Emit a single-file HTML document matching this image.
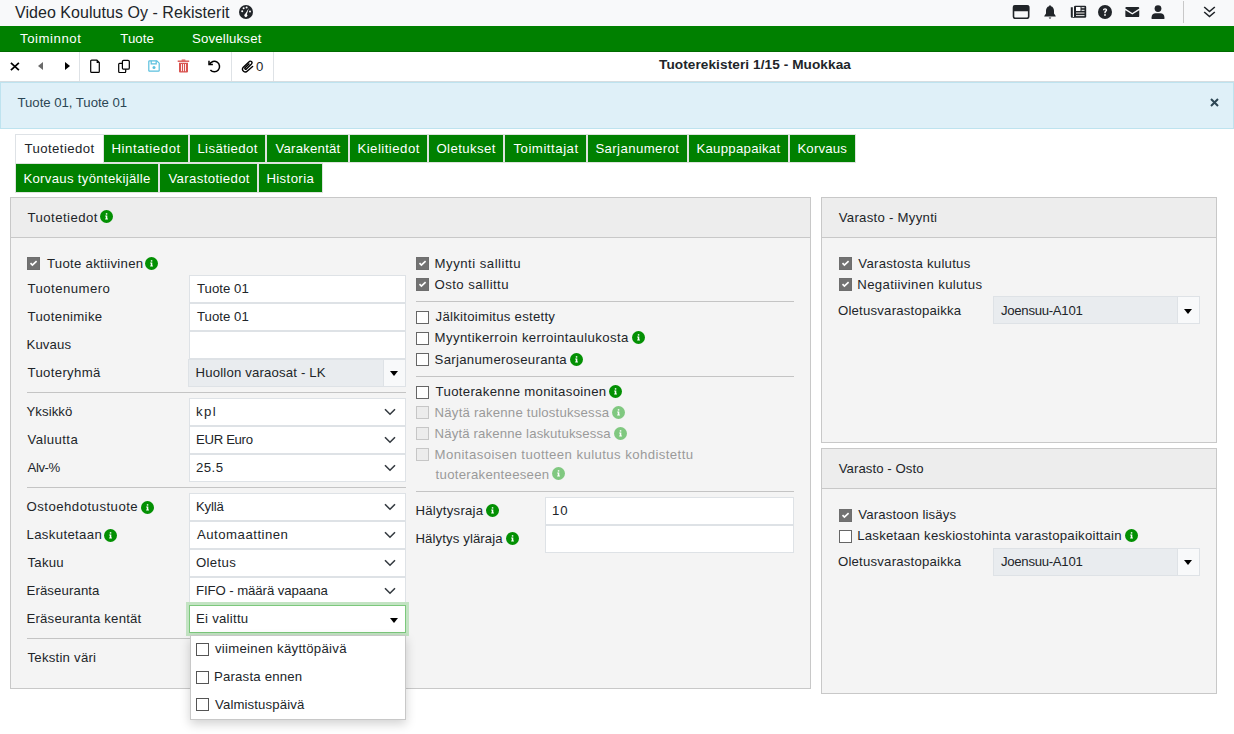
<!DOCTYPE html>
<html><head><meta charset="utf-8">
<style>
*{box-sizing:border-box;margin:0;padding:0}
html,body{width:1234px;height:734px;overflow:hidden;background:#fff;font-family:"Liberation Sans",sans-serif;color:#212529;font-size:13.2px}
.a{position:absolute}
.a svg{display:block}
.t{position:absolute;white-space:nowrap;line-height:20px}
.cb{position:absolute;width:13px;height:13px;border:1px solid #666;background:#fff}
.cb svg{position:absolute;left:-1px;top:-1px}
.cb.on{background:#727272;border-color:#6e6e6e}
.cb.dis{border-color:#c6c6c6;background:#ececec}
</style></head><body>
<div class="a" style="left:0px;top:0px;width:1234px;height:26px;background:#f8f9fa"></div>
<div class="t" style="left:15.00px;top:3.00px;font-size:16px;letter-spacing:0.045px">Video Koulutus Oy - Rekisterit</div>
<div class="a" style="left:239px;top:5px;width:14px;height:14px"><svg width="14" height="14" viewBox="0 0 14 14"><circle cx="7" cy="7" r="7" fill="#212529"/><circle cx="3.2" cy="6.2" r="1" fill="#fff"/><circle cx="4.6" cy="3.3" r="1" fill="#fff"/><circle cx="7.6" cy="2.6" r="1" fill="#fff"/><circle cx="11" cy="6.4" r="1" fill="#fff"/><path d="M9.8 3.2 L7.9 9.2 A1.6 1.6 0 1 1 6.1 9 Z" fill="#fff"/></svg></div>
<div class="a" style="left:1012px;top:5px;width:18px;height:14px"><svg width="18" height="14" viewBox="0 0 18 14"><rect x="1.5" y="0.9" width="15.2" height="12.4" rx="1.8" fill="none" stroke="#212529" stroke-width="1.6"/><rect x="1" y="0.4" width="16.2" height="5.8" rx="1" fill="#212529"/></svg></div>
<div class="a" style="left:1043px;top:5px;width:14px;height:14px"><svg width="14" height="14" viewBox="0 0 14 14"><path d="M7 0.3 C7.6 0.3 7.9 0.7 7.9 1.2 C10 1.7 11 3.5 11 5.8 L11 8.6 L12.7 10.9 V11.6 H1.3 V10.9 L3 8.6 L3 5.8 C3 3.5 4 1.7 6.1 1.2 C6.1 0.7 6.4 0.3 7 0.3Z" fill="#212529"/><path d="M5.6 12.4 H8.4 L7 13.9Z" fill="#212529"/></svg></div>
<div class="a" style="left:1070px;top:5px;width:17px;height:14px"><svg width="17" height="14" viewBox="0 0 17 14"><rect x="4" y="0.8" width="12.2" height="12" rx="1.3" fill="#212529"/><path d="M0.8 2.2 H2.8 V12.8 H2 A1.2 1.2 0 0 1 0.8 11.6Z" fill="#212529"/><rect x="2.8" y="12" width="2" height="0.8" fill="#212529"/><rect x="6" y="2" width="4.5" height="4" fill="#fff"/><rect x="11.5" y="2.2" width="3" height="1" fill="#fff"/><rect x="11.5" y="4.8" width="3" height="1" fill="#fff"/><rect x="6" y="7" width="8.5" height="2" fill="#8a8a8a"/><rect x="6" y="10.2" width="8.5" height="0.9" fill="#fff"/></svg></div>
<div class="a" style="left:1098px;top:5px;width:14px;height:14px"><svg width="14" height="14" viewBox="0 0 14 14"><circle cx="7" cy="7" r="7" fill="#212529"/><path d="M4.9 5.3 C4.9 3.9 5.9 3.2 7.1 3.2 C8.3 3.2 9.2 4 9.2 5.1 C9.2 6.5 7.7 6.6 7.7 7.8 V8.2 H6.3 V7.6 C6.3 6.1 7.7 5.9 7.7 5.1 C7.7 4.7 7.4 4.5 7 4.5 C6.6 4.5 6.3 4.8 6.3 5.3Z" fill="#fff"/><circle cx="7" cy="9.9" r="0.95" fill="#fff"/></svg></div>
<div class="a" style="left:1125px;top:7px;width:15px;height:11px"><svg width="14.6" height="10.2" viewBox="0 0 15 11"><path d="M1.2 0 H13.8 A1.2 1.2 0 0 1 15 1.2 V1.6 L7.5 6.4 L0 1.6 V1.2 A1.2 1.2 0 0 1 1.2 0Z" fill="#212529"/><path d="M0 3.4 L7.5 8.2 L15 3.4 V9.8 A1.2 1.2 0 0 1 13.8 11 H1.2 A1.2 1.2 0 0 1 0 9.8Z" fill="#212529"/></svg></div>
<div class="a" style="left:1151px;top:5px;width:14px;height:14px"><svg width="14" height="14" viewBox="0 0 14 14"><circle cx="7" cy="3.6" r="3.4" fill="#212529"/><path d="M0.6 14 V12.2 C0.6 9.9 2.4 8.3 4.6 8.3 H9.4 C11.6 8.3 13.4 9.9 13.4 12.2 V14Z" fill="#212529"/></svg></div>
<div class="a" style="left:1183px;top:1px;width:1px;height:22px;background:#c8c8c8"></div>
<div class="a" style="left:1203px;top:6px;width:13px;height:12px"><svg width="13" height="12" viewBox="0 0 13 12"><path d="M1.2 1 L6.5 5.5 L11.8 1 M1.2 6 L6.5 10.5 L11.8 6" stroke="#212529" stroke-width="1.6" fill="none"/></svg></div>
<div class="a" style="left:0px;top:26px;width:1234px;height:26px;background:#008000"></div>
<div class="a" style="left:0px;top:51px;width:1234px;height:1px;background:#006b00"></div>
<div class="t" style="left:20.00px;top:29.00px;color:#fff;letter-spacing:0.562px">Toiminnot</div>
<div class="t" style="left:120.30px;top:29.00px;color:#fff;letter-spacing:0.075px">Tuote</div>
<div class="t" style="left:192.00px;top:29.00px;color:#fff;letter-spacing:0.190px">Sovellukset</div>
<div class="a" style="left:0px;top:52px;width:1234px;height:29px;background:#fff"></div>
<div class="a" style="left:0px;top:81px;width:1234px;height:1px;background:#d6dde1"></div>
<div class="a" style="left:79px;top:52px;width:1px;height:29px;background:#dee2e6"></div>
<div class="a" style="left:231px;top:52px;width:1px;height:29px;background:#dee2e6"></div>
<div class="a" style="left:273px;top:52px;width:1px;height:29px;background:#dee2e6"></div>
<div class="a" style="left:10px;top:61.5px;width:10px;height:9px"><svg width="10" height="9" viewBox="0 0 10 9"><path d="M0.9 0.8 L8.9 8.2 M8.9 0.8 L0.9 8.2" stroke="#000" stroke-width="1.7"/></svg></div>
<div class="a" style="left:38px;top:62px;width:0;height:0;border-top:4px solid transparent;border-bottom:4px solid transparent;border-right:5px solid #6a6a6a"></div>
<div class="a" style="left:64.5px;top:62px;width:0;height:0;border-top:4px solid transparent;border-bottom:4px solid transparent;border-left:5.5px solid #000"></div>
<div class="a" style="left:90px;top:59px;width:11px;height:14px"><svg width="11" height="14" viewBox="0 0 11 14"><path d="M1.6 1.1 H6.9 L9.3 3.6 V12.4 A0.9 0.9 0 0 1 8.4 13.3 H1.6 A0.9 0.9 0 0 1 0.7 12.4 V2 A0.9 0.9 0 0 1 1.6 1.1Z" fill="none" stroke="#000" stroke-width="1.2"/><path d="M6.6 1.1 L9.4 3.9 H6.6Z" fill="#000"/></svg></div>
<div class="a" style="left:118px;top:59px;width:13px;height:14px"><svg width="13" height="14" viewBox="0 0 13 14"><rect x="4.4" y="1.3" width="6.9" height="8.9" rx="1.3" fill="none" stroke="#000" stroke-width="1.2"/><path d="M4.4 4.3 H1.6 A0.9 0.9 0 0 0 0.7 5.2 V12.6 A0.9 0.9 0 0 0 1.6 13.5 H6.8 A0.9 0.9 0 0 0 7.7 12.6 V10.2" fill="none" stroke="#000" stroke-width="1.2"/></svg></div>
<div class="a" style="left:148px;top:60px;width:12px;height:12px"><svg width="12" height="12" viewBox="0 0 12 12"><path d="M1.6 0.8 H8.8 L11.2 3.2 V10.4 A0.8 0.8 0 0 1 10.4 11.2 H1.6 A0.8 0.8 0 0 1 0.8 10.4 V1.6 A0.8 0.8 0 0 1 1.6 0.8Z" fill="none" stroke="#5bc0de" stroke-width="1.2"/><path d="M3.2 0.8 V3.9 H8.2 V0.8" fill="none" stroke="#5bc0de" stroke-width="1.2"/><circle cx="6" cy="7.4" r="1.5" fill="#5bc0de"/></svg></div>
<div class="a" style="left:177px;top:59px;width:13px;height:14px"><svg width="13" height="14" viewBox="0 0 13 14"><rect x="0.7" y="1.5" width="11.5" height="1.4" fill="#d9534f"/><rect x="4.5" y="0.6" width="4" height="1.2" rx="0.5" fill="#d9534f"/><path d="M2 3.8 H11 V12.6 A1 1 0 0 1 10 13.6 H3 A1 1 0 0 1 2 12.6Z" fill="#d9534f"/><rect x="4" y="5" width="0.9" height="7.2" fill="#fff"/><rect x="6.05" y="5" width="0.9" height="7.2" fill="#fff"/><rect x="8.1" y="5" width="0.9" height="7.2" fill="#fff"/></svg></div>
<div class="a" style="left:208px;top:60px;width:13px;height:13px"><svg width="13" height="13" viewBox="0 0 13 13"><path d="M1.6 4.4 A5.2 5.2 0 1 1 2.4 9.9" fill="none" stroke="#000" stroke-width="1.5"/><path d="M1 0.8 V4.6 H4.9" fill="none" stroke="#000" stroke-width="1.5"/></svg></div>
<div class="a" style="left:240px;top:59px;width:14px;height:14px"><svg width="14" height="14" viewBox="0 0 14 14"><path d="M12.6 7.4 L7.4 12 A2.5 2.5 0 0 1 3.3 8.3 L9.1 2.7 A1.6 1.6 0 0 1 11.5 4.9 L6.4 10 A0.9 0.9 0 0 1 5.1 8.7 L9 4.9" fill="none" stroke="#000" stroke-width="1.4" stroke-linecap="round" stroke-linejoin="round"/></svg></div>
<div class="t" style="left:256.00px;top:57.00px">0</div>
<div class="t" style="left:659.00px;top:55.00px;font-size:13.6px;font-weight:bold;letter-spacing:0.089px">Tuoterekisteri 1/15 - Muokkaa</div>
<div class="a" style="left:0px;top:82px;width:1234px;height:47px;background:#dff0f8;border:1px solid #bee3ef"></div>
<div class="t" style="left:17.50px;top:93.00px;color:#2c4654;letter-spacing:-0.035px">Tuote 01, Tuote 01</div>
<div class="a" style="left:1210px;top:98px;width:9px;height:9px"><svg width="9" height="9" viewBox="0 0 9 9"><path d="M1 1 L8 8 M8 1 L1 8" stroke="#2c4654" stroke-width="2"/></svg></div>
<div class="a" style="left:15px;top:134px;width:89px;height:29px;background:#fff;border:1px solid #dee2e6;border-bottom:none"></div>
<div class="t" style="left:24.40px;top:139.00px;letter-spacing:0.440px">Tuotetiedot</div>
<div class="a" style="left:103px;top:134px;width:86px;height:29px;background:#008000;border:1px solid #dde3dd"></div>
<div class="t" style="left:111.40px;top:139.00px;color:#fff;letter-spacing:0.580px">Hintatiedot</div>
<div class="a" style="left:189px;top:134px;width:77px;height:29px;background:#008000;border:1px solid #dde3dd"></div>
<div class="t" style="left:197.40px;top:139.00px;color:#fff;letter-spacing:0.400px">Lisätiedot</div>
<div class="a" style="left:266px;top:134px;width:83px;height:29px;background:#008000;border:1px solid #dde3dd"></div>
<div class="t" style="left:275.40px;top:139.00px;color:#fff;letter-spacing:0.233px">Varakentät</div>
<div class="a" style="left:349px;top:134px;width:79px;height:29px;background:#008000;border:1px solid #dde3dd"></div>
<div class="t" style="left:357.40px;top:139.00px;color:#fff;letter-spacing:0.480px">Kielitiedot</div>
<div class="a" style="left:428px;top:134px;width:76px;height:29px;background:#008000;border:1px solid #dde3dd"></div>
<div class="t" style="left:436.40px;top:139.00px;color:#fff;letter-spacing:0.413px">Oletukset</div>
<div class="a" style="left:504px;top:134px;width:83px;height:29px;background:#008000;border:1px solid #dde3dd"></div>
<div class="t" style="left:513.40px;top:139.00px;color:#fff;letter-spacing:0.540px">Toimittajat</div>
<div class="a" style="left:587px;top:134px;width:101px;height:29px;background:#008000;border:1px solid #dde3dd"></div>
<div class="t" style="left:595.40px;top:139.00px;color:#fff;letter-spacing:0.400px">Sarjanumerot</div>
<div class="a" style="left:688px;top:134px;width:101px;height:29px;background:#008000;border:1px solid #dde3dd"></div>
<div class="t" style="left:696.40px;top:139.00px;color:#fff;letter-spacing:0.282px">Kauppapaikat</div>
<div class="a" style="left:789px;top:134px;width:67px;height:29px;background:#008000;border:1px solid #dde3dd"></div>
<div class="t" style="left:797.40px;top:139.00px;color:#fff;letter-spacing:0.183px">Korvaus</div>
<div class="a" style="left:15px;top:163px;width:144px;height:30px;background:#008000;border:1px solid #dde3dd"></div>
<div class="t" style="left:23.40px;top:169.00px;color:#fff;letter-spacing:0.300px">Korvaus työntekijälle</div>
<div class="a" style="left:159px;top:163px;width:99px;height:30px;background:#008000;border:1px solid #dde3dd"></div>
<div class="t" style="left:168.40px;top:169.00px;color:#fff;letter-spacing:0.367px">Varastotiedot</div>
<div class="a" style="left:258px;top:163px;width:65px;height:30px;background:#008000;border:1px solid #dde3dd"></div>
<div class="t" style="left:266.40px;top:169.00px;color:#fff;letter-spacing:0.386px">Historia</div>
<div class="a" style="left:10px;top:197px;width:801px;height:492px;background:#f4f4f4;border:1px solid #c8c8c8"></div>
<div class="a" style="left:11px;top:198px;width:799px;height:40px;background:#ededed;border-bottom:1px solid #c8c8c8"></div>
<div class="a" style="left:821px;top:197px;width:396px;height:246px;background:#f4f4f4;border:1px solid #c8c8c8"></div>
<div class="a" style="left:822px;top:198px;width:394px;height:40px;background:#ededed;border-bottom:1px solid #c8c8c8"></div>
<div class="a" style="left:821px;top:448px;width:396px;height:246px;background:#f4f4f4;border:1px solid #c8c8c8"></div>
<div class="a" style="left:822px;top:449px;width:394px;height:40px;background:#ededed;border-bottom:1px solid #c8c8c8"></div>
<div class="t" style="left:27.50px;top:208.00px;letter-spacing:0.440px">Tuotetiedot</div>
<div class="a" style="left:100px;top:210px;width:13px;height:13px"><svg width="13" height="13" viewBox="0 0 13 13"><circle cx="6.5" cy="6.5" r="6.5" fill="#039003"/><rect x="5.8" y="3.2" width="1.5" height="1.4" fill="#fff"/><path d="M5.2 5.5 H7.3 V8.6 H7.9 V9.6 H5.2 V8.6 H5.8 V6.4 H5.2Z" fill="#fff"/></svg></div>
<div class="cb on" style="left:27px;top:257px"><svg width="13" height="13" viewBox="0 0 13 13"><path d="M3.5 6.2 L5.4 8 L9.6 4.1" stroke="#fff" stroke-width="1.7" fill="none"/></svg></div>
<div class="t" style="left:47.00px;top:254.00px;letter-spacing:0.280px">Tuote aktiivinen</div>
<div class="a" style="left:145px;top:256.5px;width:13px;height:13px"><svg width="13" height="13" viewBox="0 0 13 13"><circle cx="6.5" cy="6.5" r="6.5" fill="#039003"/><rect x="5.8" y="3.2" width="1.5" height="1.4" fill="#fff"/><path d="M5.2 5.5 H7.3 V8.6 H7.9 V9.6 H5.2 V8.6 H5.8 V6.4 H5.2Z" fill="#fff"/></svg></div>
<div class="t" style="left:27.50px;top:279.00px;letter-spacing:0.440px">Tuotenumero</div>
<div class="a" style="left:189px;top:275px;width:217px;height:28px;background:#fff;border:1px solid #dee2e6"></div>
<div class="t" style="left:197.00px;top:279.00px;letter-spacing:0.029px">Tuote 01</div>
<div class="t" style="left:27.50px;top:307.00px;letter-spacing:0.330px">Tuotenimike</div>
<div class="a" style="left:189px;top:303px;width:217px;height:28px;background:#fff;border:1px solid #dee2e6"></div>
<div class="t" style="left:197.00px;top:307.00px;letter-spacing:0.029px">Tuote 01</div>
<div class="t" style="left:26.50px;top:335.00px;letter-spacing:0.120px">Kuvaus</div>
<div class="a" style="left:189px;top:331px;width:217px;height:28px;background:#fff;border:1px solid #dee2e6"></div>
<div class="t" style="left:27.50px;top:363.00px;letter-spacing:0.333px">Tuoteryhmä</div>
<div class="a" style="left:188px;top:359px;width:218px;height:28px;background:#e9ecef;border:1px solid #dee2e6"></div>
<div class="a" style="left:383px;top:360px;width:22px;height:26px;background:#f8f9fa;border-left:1px solid #dee2e6"></div>
<div class="t" style="left:195.50px;top:363.00px;letter-spacing:0.165px">Huollon varaosat - LK</div>
<div class="a" style="left:389.5px;top:371px;width:0;height:0;border-left:4.5px solid transparent;border-right:4.5px solid transparent;border-top:5px solid #000"></div>
<div class="a" style="left:27px;top:392px;width:379px;height:1px;background:#c4c4c4"></div>
<div class="t" style="left:26.50px;top:402.00px;letter-spacing:0.067px">Yksikkö</div>
<div class="a" style="left:189px;top:398px;width:217px;height:28px;background:#fff;border:1px solid #dee2e6"></div>
<div class="t" style="left:196.00px;top:402.00px;letter-spacing:1.350px">kpl</div>
<div class="a" style="left:384px;top:408px;width:12px;height:8px"><svg width="12" height="8" viewBox="0 0 12 8"><path d="M1 1.2 L6 6.2 L11 1.2" stroke="#343a40" stroke-width="1.6" fill="none"/></svg></div>
<div class="t" style="left:27.50px;top:430.00px;letter-spacing:0.400px">Valuutta</div>
<div class="a" style="left:189px;top:426px;width:217px;height:28px;background:#fff;border:1px solid #dee2e6"></div>
<div class="t" style="left:196.00px;top:430.00px;letter-spacing:-0.343px">EUR Euro</div>
<div class="a" style="left:384px;top:436px;width:12px;height:8px"><svg width="12" height="8" viewBox="0 0 12 8"><path d="M1 1.2 L6 6.2 L11 1.2" stroke="#343a40" stroke-width="1.6" fill="none"/></svg></div>
<div class="t" style="left:27.50px;top:458.00px;letter-spacing:-0.400px">Alv-%</div>
<div class="a" style="left:189px;top:454px;width:217px;height:28px;background:#fff;border:1px solid #dee2e6"></div>
<div class="t" style="left:196.00px;top:458.00px;letter-spacing:0.467px">25.5</div>
<div class="a" style="left:384px;top:464px;width:12px;height:8px"><svg width="12" height="8" viewBox="0 0 12 8"><path d="M1 1.2 L6 6.2 L11 1.2" stroke="#343a40" stroke-width="1.6" fill="none"/></svg></div>
<div class="a" style="left:27px;top:487px;width:379px;height:1px;background:#c4c4c4"></div>
<div class="t" style="left:26.50px;top:497.00px;letter-spacing:0.473px">Ostoehdotustuote</div>
<div class="a" style="left:140.7px;top:500.5px;width:13px;height:13px"><svg width="13" height="13" viewBox="0 0 13 13"><circle cx="6.5" cy="6.5" r="6.5" fill="#039003"/><rect x="5.8" y="3.2" width="1.5" height="1.4" fill="#fff"/><path d="M5.2 5.5 H7.3 V8.6 H7.9 V9.6 H5.2 V8.6 H5.8 V6.4 H5.2Z" fill="#fff"/></svg></div>
<div class="a" style="left:189px;top:493px;width:217px;height:28px;background:#fff;border:1px solid #dee2e6"></div>
<div class="t" style="left:196.00px;top:497.00px;letter-spacing:-0.175px">Kyllä</div>
<div class="a" style="left:384px;top:503px;width:12px;height:8px"><svg width="12" height="8" viewBox="0 0 12 8"><path d="M1 1.2 L6 6.2 L11 1.2" stroke="#343a40" stroke-width="1.6" fill="none"/></svg></div>
<div class="t" style="left:26.50px;top:525.00px;letter-spacing:0.340px">Laskutetaan</div>
<div class="a" style="left:104px;top:528.5px;width:13px;height:13px"><svg width="13" height="13" viewBox="0 0 13 13"><circle cx="6.5" cy="6.5" r="6.5" fill="#039003"/><rect x="5.8" y="3.2" width="1.5" height="1.4" fill="#fff"/><path d="M5.2 5.5 H7.3 V8.6 H7.9 V9.6 H5.2 V8.6 H5.8 V6.4 H5.2Z" fill="#fff"/></svg></div>
<div class="a" style="left:189px;top:521px;width:217px;height:28px;background:#fff;border:1px solid #dee2e6"></div>
<div class="t" style="left:197.00px;top:525.00px;letter-spacing:0.492px">Automaattinen</div>
<div class="a" style="left:384px;top:531px;width:12px;height:8px"><svg width="12" height="8" viewBox="0 0 12 8"><path d="M1 1.2 L6 6.2 L11 1.2" stroke="#343a40" stroke-width="1.6" fill="none"/></svg></div>
<div class="t" style="left:27.50px;top:553.00px;letter-spacing:0.250px">Takuu</div>
<div class="a" style="left:189px;top:549px;width:217px;height:28px;background:#fff;border:1px solid #dee2e6"></div>
<div class="t" style="left:196.00px;top:553.00px;letter-spacing:0.340px">Oletus</div>
<div class="a" style="left:384px;top:559px;width:12px;height:8px"><svg width="12" height="8" viewBox="0 0 12 8"><path d="M1 1.2 L6 6.2 L11 1.2" stroke="#343a40" stroke-width="1.6" fill="none"/></svg></div>
<div class="t" style="left:26.50px;top:581.00px;letter-spacing:0.110px">Eräseuranta</div>
<div class="a" style="left:189px;top:577px;width:217px;height:28px;background:#fff;border:1px solid #dee2e6"></div>
<div class="t" style="left:196.00px;top:581.00px;letter-spacing:-0.079px">FIFO - määrä vapaana</div>
<div class="a" style="left:384px;top:587px;width:12px;height:8px"><svg width="12" height="8" viewBox="0 0 12 8"><path d="M1 1.2 L6 6.2 L11 1.2" stroke="#343a40" stroke-width="1.6" fill="none"/></svg></div>
<div class="t" style="left:26.50px;top:609.00px;letter-spacing:0.194px">Eräseuranta kentät</div>
<div class="a" style="left:27px;top:638px;width:379px;height:1px;background:#c4c4c4"></div>
<div class="t" style="left:27.50px;top:648.00px;letter-spacing:0.236px">Tekstin väri</div>
<div class="a" style="left:186px;top:602px;width:223px;height:34px;background:#c3e3c3"></div>
<div class="a" style="left:188.5px;top:605px;width:217.5px;height:28px;background:#fff;border:1px solid #7cc87c"></div>
<div class="t" style="left:196.00px;top:609.00px;letter-spacing:0.256px">Ei valittu</div>
<div class="a" style="left:389.5px;top:618px;width:0;height:0;border-left:4.5px solid transparent;border-right:4.5px solid transparent;border-top:5px solid #000"></div>
<div class="a" style="left:189.5px;top:635px;width:216px;height:85px;background:#fff;border:1px solid #c8c8c8;box-shadow:0 4px 10px rgba(0,0,0,.18)"></div>
<div class="a" style="left:196px;top:643px;width:13px;height:13px;background:#fff;border:1px solid #555"></div>
<div class="t" style="left:215.00px;top:639.00px;letter-spacing:0.270px">viimeinen käyttöpäivä</div>
<div class="a" style="left:196px;top:670.5px;width:13px;height:13px;background:#fff;border:1px solid #555"></div>
<div class="t" style="left:214.00px;top:667.00px;letter-spacing:0.192px">Parasta ennen</div>
<div class="a" style="left:196px;top:698.3px;width:13px;height:13px;background:#fff;border:1px solid #555"></div>
<div class="t" style="left:215.00px;top:695.00px;letter-spacing:0.123px">Valmistuspäivä</div>
<div class="cb on" style="left:416px;top:257px"><svg width="13" height="13" viewBox="0 0 13 13"><path d="M3.5 6.2 L5.4 8 L9.6 4.1" stroke="#fff" stroke-width="1.7" fill="none"/></svg></div>
<div class="t" style="left:434.60px;top:254.00px;letter-spacing:0.486px">Myynti sallittu</div>
<div class="cb on" style="left:416px;top:278px"><svg width="13" height="13" viewBox="0 0 13 13"><path d="M3.5 6.2 L5.4 8 L9.6 4.1" stroke="#fff" stroke-width="1.7" fill="none"/></svg></div>
<div class="t" style="left:434.60px;top:275.00px;letter-spacing:0.417px">Osto sallittu</div>
<div class="a" style="left:416px;top:301px;width:378px;height:1px;background:#c4c4c4"></div>
<div class="cb" style="left:416px;top:311px"></div>
<div class="t" style="left:435.60px;top:307.00px;letter-spacing:0.250px">Jälkitoimitus estetty</div>
<div class="cb" style="left:416px;top:332px"></div>
<div class="t" style="left:434.60px;top:328.00px;letter-spacing:0.373px">Myyntikerroin kerrointaulukosta</div>
<div class="a" style="left:632px;top:331px;width:13px;height:13px"><svg width="13" height="13" viewBox="0 0 13 13"><circle cx="6.5" cy="6.5" r="6.5" fill="#039003"/><rect x="5.8" y="3.2" width="1.5" height="1.4" fill="#fff"/><path d="M5.2 5.5 H7.3 V8.6 H7.9 V9.6 H5.2 V8.6 H5.8 V6.4 H5.2Z" fill="#fff"/></svg></div>
<div class="cb" style="left:416px;top:353px"></div>
<div class="t" style="left:434.60px;top:350.00px;letter-spacing:0.294px">Sarjanumeroseuranta</div>
<div class="a" style="left:570px;top:352.5px;width:13px;height:13px"><svg width="13" height="13" viewBox="0 0 13 13"><circle cx="6.5" cy="6.5" r="6.5" fill="#039003"/><rect x="5.8" y="3.2" width="1.5" height="1.4" fill="#fff"/><path d="M5.2 5.5 H7.3 V8.6 H7.9 V9.6 H5.2 V8.6 H5.8 V6.4 H5.2Z" fill="#fff"/></svg></div>
<div class="a" style="left:416px;top:376px;width:378px;height:1px;background:#c4c4c4"></div>
<div class="cb" style="left:416px;top:385.5px"></div>
<div class="t" style="left:435.60px;top:382.00px;letter-spacing:0.317px">Tuoterakenne monitasoinen</div>
<div class="a" style="left:608.5px;top:384.5px;width:13px;height:13px"><svg width="13" height="13" viewBox="0 0 13 13"><circle cx="6.5" cy="6.5" r="6.5" fill="#039003"/><rect x="5.8" y="3.2" width="1.5" height="1.4" fill="#fff"/><path d="M5.2 5.5 H7.3 V8.6 H7.9 V9.6 H5.2 V8.6 H5.8 V6.4 H5.2Z" fill="#fff"/></svg></div>
<div class="cb dis" style="left:416px;top:406px"></div>
<div class="t" style="left:434.60px;top:403.00px;color:#9a9a9a;letter-spacing:0.196px">Näytä rakenne tulostuksessa</div>
<div class="a" style="left:611.8px;top:405.5px;width:13px;height:13px"><svg width="13" height="13" viewBox="0 0 13 13"><circle cx="6.5" cy="6.5" r="6.5" fill="#80c880"/><rect x="5.8" y="3.2" width="1.5" height="1.4" fill="#fff"/><path d="M5.2 5.5 H7.3 V8.6 H7.9 V9.6 H5.2 V8.6 H5.8 V6.4 H5.2Z" fill="#fff"/></svg></div>
<div class="cb dis" style="left:416px;top:427px"></div>
<div class="t" style="left:434.60px;top:424.00px;color:#9a9a9a;letter-spacing:0.146px">Näytä rakenne laskutuksessa</div>
<div class="a" style="left:613.5px;top:426.5px;width:13px;height:13px"><svg width="13" height="13" viewBox="0 0 13 13"><circle cx="6.5" cy="6.5" r="6.5" fill="#80c880"/><rect x="5.8" y="3.2" width="1.5" height="1.4" fill="#fff"/><path d="M5.2 5.5 H7.3 V8.6 H7.9 V9.6 H5.2 V8.6 H5.8 V6.4 H5.2Z" fill="#fff"/></svg></div>
<div class="cb dis" style="left:416px;top:448px"></div>
<div class="t" style="left:434.60px;top:445.00px;color:#9a9a9a;letter-spacing:0.415px">Monitasoisen tuotteen kulutus kohdistettu</div>
<div class="t" style="left:435.60px;top:465.00px;color:#9a9a9a;letter-spacing:0.269px">tuoterakenteeseen</div>
<div class="a" style="left:552.2px;top:467px;width:13px;height:13px"><svg width="13" height="13" viewBox="0 0 13 13"><circle cx="6.5" cy="6.5" r="6.5" fill="#80c880"/><rect x="5.8" y="3.2" width="1.5" height="1.4" fill="#fff"/><path d="M5.2 5.5 H7.3 V8.6 H7.9 V9.6 H5.2 V8.6 H5.8 V6.4 H5.2Z" fill="#fff"/></svg></div>
<div class="a" style="left:416px;top:491px;width:378px;height:1px;background:#c4c4c4"></div>
<div class="t" style="left:415.50px;top:501.00px;letter-spacing:0.240px">Hälytysraja</div>
<div class="a" style="left:486px;top:503.5px;width:13px;height:13px"><svg width="13" height="13" viewBox="0 0 13 13"><circle cx="6.5" cy="6.5" r="6.5" fill="#039003"/><rect x="5.8" y="3.2" width="1.5" height="1.4" fill="#fff"/><path d="M5.2 5.5 H7.3 V8.6 H7.9 V9.6 H5.2 V8.6 H5.8 V6.4 H5.2Z" fill="#fff"/></svg></div>
<div class="a" style="left:545px;top:497px;width:249px;height:28px;background:#fff;border:1px solid #dee2e6"></div>
<div class="t" style="left:552.00px;top:501.00px;letter-spacing:1.000px">10</div>
<div class="t" style="left:415.50px;top:529.00px;letter-spacing:0.100px">Hälytys yläraja</div>
<div class="a" style="left:506px;top:531.5px;width:13px;height:13px"><svg width="13" height="13" viewBox="0 0 13 13"><circle cx="6.5" cy="6.5" r="6.5" fill="#039003"/><rect x="5.8" y="3.2" width="1.5" height="1.4" fill="#fff"/><path d="M5.2 5.5 H7.3 V8.6 H7.9 V9.6 H5.2 V8.6 H5.8 V6.4 H5.2Z" fill="#fff"/></svg></div>
<div class="a" style="left:545px;top:525px;width:249px;height:28px;background:#fff;border:1px solid #dee2e6"></div>
<div class="t" style="left:838.80px;top:208.00px;letter-spacing:0.260px">Varasto - Myynti</div>
<div class="cb on" style="left:839px;top:257px"><svg width="13" height="13" viewBox="0 0 13 13"><path d="M3.5 6.2 L5.4 8 L9.6 4.1" stroke="#fff" stroke-width="1.7" fill="none"/></svg></div>
<div class="t" style="left:858.30px;top:254.00px;letter-spacing:0.265px">Varastosta kulutus</div>
<div class="cb on" style="left:839px;top:278px"><svg width="13" height="13" viewBox="0 0 13 13"><path d="M3.5 6.2 L5.4 8 L9.6 4.1" stroke="#fff" stroke-width="1.7" fill="none"/></svg></div>
<div class="t" style="left:857.30px;top:275.00px;letter-spacing:0.358px">Negatiivinen kulutus</div>
<div class="t" style="left:838.00px;top:301.00px;letter-spacing:0.200px">Oletusvarastopaikka</div>
<div class="a" style="left:993px;top:296px;width:207px;height:28px;background:#e9ecef;border:1px solid #dee2e6"></div>
<div class="a" style="left:1177px;top:297px;width:22px;height:26px;background:#f8f9fa;border-left:1px solid #dee2e6"></div>
<div class="t" style="left:1001.00px;top:301.00px;letter-spacing:-0.300px">Joensuu-A101</div>
<div class="a" style="left:1183.5px;top:308.5px;width:0;height:0;border-left:4.5px solid transparent;border-right:4.5px solid transparent;border-top:5px solid #000"></div>
<div class="t" style="left:838.70px;top:459.00px;letter-spacing:0.062px">Varasto - Osto</div>
<div class="cb on" style="left:839px;top:509px"><svg width="13" height="13" viewBox="0 0 13 13"><path d="M3.5 6.2 L5.4 8 L9.6 4.1" stroke="#fff" stroke-width="1.7" fill="none"/></svg></div>
<div class="t" style="left:858.20px;top:505.00px;letter-spacing:0.147px">Varastoon lisäys</div>
<div class="cb" style="left:839px;top:530px"></div>
<div class="t" style="left:857.20px;top:526.00px;letter-spacing:0.238px">Lasketaan keskiostohinta varastopaikoittain</div>
<div class="a" style="left:1125px;top:529px;width:13px;height:13px"><svg width="13" height="13" viewBox="0 0 13 13"><circle cx="6.5" cy="6.5" r="6.5" fill="#039003"/><rect x="5.8" y="3.2" width="1.5" height="1.4" fill="#fff"/><path d="M5.2 5.5 H7.3 V8.6 H7.9 V9.6 H5.2 V8.6 H5.8 V6.4 H5.2Z" fill="#fff"/></svg></div>
<div class="t" style="left:838.00px;top:552.00px;letter-spacing:0.200px">Oletusvarastopaikka</div>
<div class="a" style="left:993px;top:548px;width:207px;height:28px;background:#e9ecef;border:1px solid #dee2e6"></div>
<div class="a" style="left:1177px;top:549px;width:22px;height:26px;background:#f8f9fa;border-left:1px solid #dee2e6"></div>
<div class="t" style="left:1001.00px;top:552.00px;letter-spacing:-0.300px">Joensuu-A101</div>
<div class="a" style="left:1183.5px;top:560px;width:0;height:0;border-left:4.5px solid transparent;border-right:4.5px solid transparent;border-top:5px solid #000"></div>
</body></html>
